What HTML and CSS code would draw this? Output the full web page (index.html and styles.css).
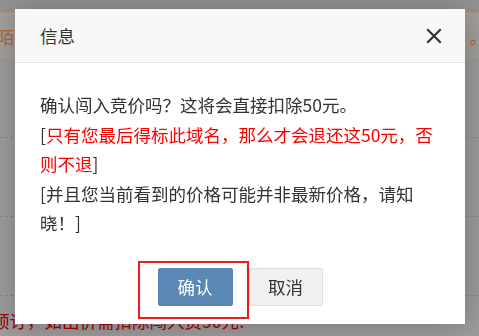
FILE: index.html
```html
<!DOCTYPE html>
<html lang="zh-CN">
<head>
<meta charset="utf-8">
<title>信息</title>
<link rel="stylesheet" href="styles.css">
</head>
<body>
<div class="page">
  <div class="top-strip"></div>
  <div class="notice">
    <span class="notice-left">陌</span>
    <span class="notice-right">。</span>
  </div>
  <div class="row row-a"></div>
  <div class="row row-b"></div>
  <div class="row row-c"></div>
  <div class="foot-text">预订，如出价需扣除闯入费50元!</div>
</div>

<div class="dialog">
  <div class="dialog-title">
    <span>信息</span>
    <svg class="close" width="16" height="16" viewBox="0 0 16 16">
      <path d="M2 2 L14 14 M14 2 L2 14" stroke="#333" stroke-width="2.2" stroke-linecap="square" fill="none"/>
    </svg>
  </div>
  <div class="dialog-content">确认闯入竞价吗？这将会直接扣除50元。<br>[<span class="red">只有您最后得标此域名，那么才会退还这50元，否则不退</span>]<br>[并且您当前看到的价格可能并非最新价格，请知晓！]</div>
  <div class="dialog-btns">
    <button class="btn btn-primary">确认</button>
    <button class="btn btn-default">取消</button>
  </div>
  <div class="highlight"></div>
</div>
</body>
</html>
```

FILE: styles.css
```css
* { box-sizing: border-box; }
html, body {
  margin: 0;
  padding: 0;
  width: 479px;
  height: 336px;
  overflow: hidden;
  background: #9d9d9d;
  font-family: "Noto Sans CJK SC", "Noto Sans", sans-serif;
}
.page {
  display: flex;
  flex-direction: column;
  width: 479px;
  height: 336px;
}
.top-strip {
  height: 12px;
  background: #939393;
}
.notice {
  height: 48px;
  background: #a29f9c;
  border-top: 1px solid #b4907a;
  border-bottom: 1px solid #b4907a;
  display: flex;
  justify-content: space-between;
  align-items: center;
  margin-left: -3px;
  font-size: 17.5px;
  color: #b2663f;
}
.notice-right { margin-right: -8px; }
.row {
  border-bottom: 1px dashed #888;
}
.row-a { height: 78px; }
.row-b { height: 79px; }
.row-c { height: 79px; }
.foot-text {
  margin-left: -8px;
  margin-top: 14px;
  font-size: 17.5px;
  line-height: 22px;
  color: #a40000;
  white-space: nowrap;
}

.dialog {
  position: fixed;
  left: 15px;
  top: 9px;
  width: 450px;
  height: 315px;
  background: #fff;
  box-shadow: 1px 1px 30px rgba(0, 0, 0, 0.25);
  display: flex;
  flex-direction: column;
}
.dialog-title {
  height: 54px;
  background: #f8f8f8;
  border-bottom: 1px solid #e2e2e2;
  display: flex;
  align-items: center;
  justify-content: space-between;
  padding: 0 23px 0 25px;
  font-size: 17.5px;
  color: #333;
}
.close { display: block; }
.dialog-content {
  padding: 27px 25px 0 25px;
  font-size: 17.5px;
  line-height: 29.5px;
  color: #333;
  height: 205px;
}
.red { color: #f00; }
.dialog-btns {
  display: flex;
  justify-content: center;
  gap: 16px;
  padding-top: 0;
}
.btn {
  height: 38px;
  width: 75px;
  font-family: inherit;
  font-size: 17.5px;
  border-radius: 2px;
  padding: 0;
  line-height: 36px;
}
.btn-primary {
  background: #5a87b3;
  border: 1px solid #5687b8;
  color: #fff;
}
.btn-default {
  width: 74px;
  background: #f1f1f1;
  border: 1px solid #dedede;
  color: #333;
}
.highlight {
  position: absolute;
  left: 123px;
  top: 252px;
  width: 111px;
  height: 58px;
  border: 2px solid #ee1c1c;
}
```
